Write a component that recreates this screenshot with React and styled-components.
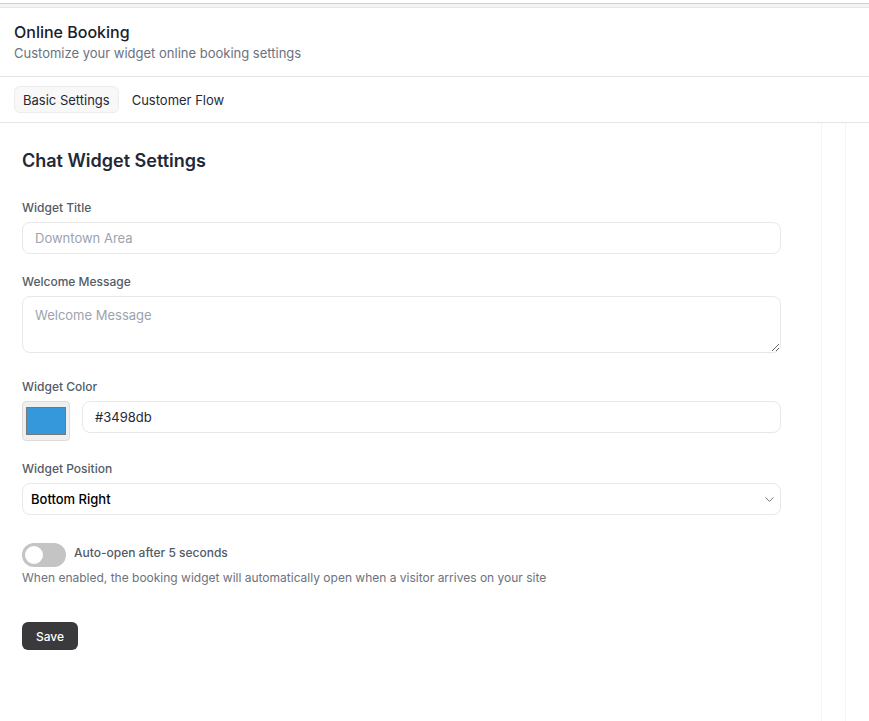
import React, { useState } from "react";
import styled, { createGlobalStyle } from "styled-components";
import { ChevronDown } from "lucide-react";

const GlobalStyle = createGlobalStyle`
  * { box-sizing: border-box; }
  body {
    margin: 0;
    background: #fff;
    font-family: Inter, "Noto Sans", "Liberation Sans", sans-serif;
    color: #111827;
  }
`;

const Page = styled.div`
  min-height: 721px;
  display: flex;
  flex-direction: column;
`;

const TopStrip = styled.div`
  margin-top: 3px;
  height: 5px;
  background: #f3f3f3;
  border-top: 1px solid #d0d0d0;
  border-bottom: 1px solid #e6e6e6;
`;

const Header = styled.div`
  padding: 12px 14px 14px;
  border-bottom: 1px solid #e5e5e5;
`;

const Title = styled.h1`
  margin: 0;
  font-size: 16px;
  line-height: 24px;
  font-weight: 500;
  color: #1a202c;
`;

const Subtitle = styled.p`
  margin: 0;
  font-size: 13px;
  line-height: 18px;
  color: #6b7280;
`;

const Tabs = styled.div`
  display: flex;
  gap: 4px;
  padding: 9px 14px;
  border-bottom: 1px solid #e5e5e5;
`;

const Tab = styled.button`
  height: 27px;
  padding: 0 8px;
  font-family: inherit;
  font-size: 13px;
  color: #1f2937;
  border-radius: 6px;
  cursor: pointer;
  border: 1px solid ${(p) => (p.active ? "#ececec" : "transparent")};
  background: ${(p) => (p.active ? "#f8f8f8" : "transparent")};
`;

const Body = styled.div`
  flex: 1;
  display: flex;
`;

const Main = styled.div`
  width: 822px;
  padding: 26px 40px 40px 22px;
  border-right: 1px solid #f4f4f4;
`;

const SideRail = styled.div`
  width: 24px;
  border-right: 1px solid #f4f4f4;
`;

const Heading = styled.h2`
  margin: 0 0 27px;
  font-size: 18px;
  line-height: 24px;
  font-weight: 600;
  color: #1f2937;
`;

const Field = styled.div`
  display: flex;
  flex-direction: column;
  gap: 6px;
  margin-bottom: ${(p) => (p.spacing === undefined ? 20 : p.spacing)}px;
`;

const Label = styled.label`
  font-size: 12px;
  line-height: 16px;
  font-weight: 500;
  color: #535b67;
`;

const Input = styled.input`
  width: 100%;
  height: 32px;
  padding: 0 12px;
  font-family: inherit;
  font-size: 13px;
  color: #1f2937;
  border: 1px solid #e8e8e8;
  border-radius: 8px;
  outline: none;
  &::placeholder { color: #9ca3af; }
`;

const TextArea = styled.textarea`
  display: block;
  width: 100%;
  height: 57px;
  padding: 9px 12px;
  font-family: inherit;
  font-size: 13px;
  line-height: 18px;
  border: 1px solid #e8e8e8;
  border-radius: 8px;
  outline: none;
  &::placeholder { color: #9ca3af; }
`;

const ColorRow = styled.div`
  display: flex;
  align-items: flex-start;
  gap: 12px;
`;

const Swatch = styled.input`
  flex: none;
  width: 48px;
  height: 40px;
  padding: 1px 1px;
  background: #efefef;
  border: 1px solid #dcdcdc;
  border-radius: 4px;
  cursor: pointer;
`;

const SelectWrap = styled.div`
  position: relative;
`;

const Select = styled.select`
  width: 100%;
  height: 32px;
  padding: 0 8px;
  appearance: none;
  font-family: inherit;
  font-size: 13px;
  font-weight: 500;
  color: #000;
  background: #fff;
  border: 1px solid #e8e8e8;
  border-radius: 8px;
  outline: none;
`;

const Chevron = styled(ChevronDown)`
  position: absolute;
  right: 4px;
  top: 9px;
  pointer-events: none;
  color: #6b6b6b;
`;

const ToggleRow = styled.div`
  display: flex;
  align-items: flex-start;
  gap: 8px;
  margin-top: 28px;
`;

const Switch = styled.button`
  position: relative;
  width: 44px;
  height: 24px;
  padding: 0;
  border: none;
  border-radius: 12px;
  background: ${(p) => (p.on ? "#3498db" : "#c4c4c4")};
  cursor: pointer;
  &::after {
    content: "";
    position: absolute;
    top: 3px;
    left: ${(p) => (p.on ? "23px" : "3px")};
    width: 18px;
    height: 18px;
    border-radius: 50%;
    background: #fff;
  }
`;

const ToggleLabel = styled.span`
  font-size: 12px;
  line-height: 20px;
  font-weight: 500;
  color: #535b67;
`;

const Help = styled.p`
  margin: 3px 0 0;
  font-size: 12px;
  line-height: 16px;
  color: #6b7280;
`;

const SaveButton = styled.button`
  margin-top: 36px;
  height: 28px;
  width: 56px;
  font-family: inherit;
  font-size: 12px;
  font-weight: 500;
  color: #fff;
  background: #3a3a3c;
  border: none;
  border-radius: 6px;
  cursor: pointer;
`;

export default function App() {
  const [tab, setTab] = useState("basic");
  const [color, setColor] = useState("#3498db");
  const [autoOpen, setAutoOpen] = useState(false);

  return (
    <Page>
      <GlobalStyle />
      <TopStrip />
      <Header>
        <Title>Online Booking</Title>
        <Subtitle>Customize your widget online booking settings</Subtitle>
      </Header>
      <Tabs>
        <Tab active={tab === "basic"} onClick={() => setTab("basic")}>
          Basic Settings
        </Tab>
        <Tab active={tab === "flow"} onClick={() => setTab("flow")}>
          Customer Flow
        </Tab>
      </Tabs>
      <Body>
        <Main>
          <Heading>Chat Widget Settings</Heading>

          <Field>
            <Label>Widget Title</Label>
            <Input placeholder="Downtown Area" />
          </Field>

          <Field spacing={26}>
            <Label>Welcome Message</Label>
            <TextArea placeholder="Welcome Message" />
          </Field>

          <Field>
            <Label>Widget Color</Label>
            <ColorRow>
              <Swatch
                type="color"
                value={color}
                onChange={(e) => setColor(e.target.value)}
              />
              <Input value={color} onChange={(e) => setColor(e.target.value)} />
            </ColorRow>
          </Field>

          <Field spacing={0}>
            <Label>Widget Position</Label>
            <SelectWrap>
              <Select defaultValue="bottom-right">
                <option value="bottom-right">Bottom Right</option>
                <option value="bottom-left">Bottom Left</option>
              </Select>
              <Chevron size={15} strokeWidth={1.5} />
            </SelectWrap>
          </Field>

          <ToggleRow>
            <Switch on={autoOpen} onClick={() => setAutoOpen(!autoOpen)} />
            <ToggleLabel>Auto-open after 5 seconds</ToggleLabel>
          </ToggleRow>
          <Help>
            When enabled, the booking widget will automatically open when a
            visitor arrives on your site
          </Help>

          <SaveButton>Save</SaveButton>
        </Main>
        <SideRail />
      </Body>
    </Page>
  );
}
